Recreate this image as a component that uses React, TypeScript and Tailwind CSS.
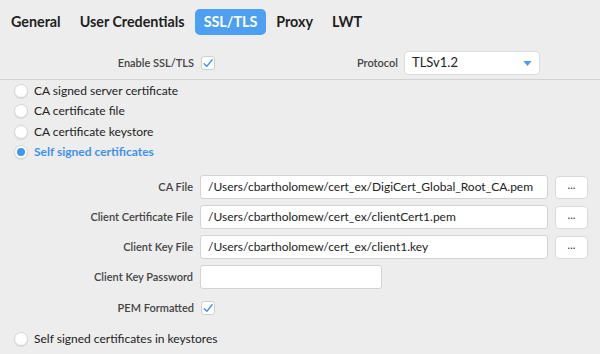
const TABS = ["General", "User Credentials", "SSL/TLS", "Proxy", "LWT"];

const OPTIONS = [
  { label: "CA signed server certificate", selected: false },
  { label: "CA certificate file", selected: false },
  { label: "CA certificate keystore", selected: false },
  { label: "Self signed certificates", selected: true },
];

const FILES = [
  { label: "CA File", value: "/Users/cbartholomew/cert_ex/DigiCert_Global_Root_CA.pem" },
  { label: "Client Certificate File", value: "/Users/cbartholomew/cert_ex/clientCert1.pem" },
  { label: "Client Key File", value: "/Users/cbartholomew/cert_ex/client1.key" },
];

function Radio({ selected }: { selected: boolean }) {
  return (
    <span className="w-[14px] h-[14px] rounded-full bg-white border border-[#d6d6d6] shadow-[0_1px_1px_rgba(0,0,0,0.08)] flex items-center justify-center shrink-0">
      {selected && <span className="w-[8px] h-[8px] rounded-full bg-[#3d97f3]" />}
    </span>
  );
}

function Check() {
  return (
    <span className="w-[14px] h-[14px] rounded-[3px] bg-white border border-[#cfcfcf] flex items-center justify-center">
      <svg viewBox="0 0 14 14" className="w-[13px] h-[13px]">
        <path d="M2.5 7.2 L5.6 10.3 L11.8 2.6" fill="none" stroke="#3d8ff0" strokeWidth="1.6" strokeLinecap="round" strokeLinejoin="round" />
      </svg>
    </span>
  );
}

export default function App() {
  return (
    <div className="w-[600px] h-[354px] bg-[#ededed] overflow-hidden text-[#333] font-['Lato','Open_Sans',sans-serif]">
      {/* Tabs */}
      <div className="flex items-center h-[42px] pl-[2px] pt-[1px] gap-[1px]">
        {TABS.map((t) => (
          <span
            key={t}
            className={`px-[9px] h-[26px] flex items-center rounded-[5px] text-[14.3px] font-bold ${
              t === "SSL/TLS" ? "bg-[#4d9ff2] text-white" : "text-[#1e1e1e]"
            }`}
          >
            {t}
          </span>
        ))}
      </div>

      {/* Enable / Protocol */}
      <div className="flex items-center h-[38px] pt-[5px] border-b border-[#d2d2d2]">
        <div className="w-[194px] text-right text-[11px] font-semibold text-[#444]">Enable SSL/TLS</div>
        <div className="ml-[7px]">
          <Check />
        </div>
        <div className="w-[183px] text-right text-[11px] font-semibold text-[#444]">Protocol</div>
        <div className="ml-[6px] w-[136px] h-[24px] bg-white rounded-[4px] border border-[#dcdcdc] flex items-center justify-between pl-[7px] pr-[7px] text-[13px] text-[#222]">
          TLSv1.2
          <svg viewBox="0 0 10 6" className="w-[9px] h-[5px]">
            <path d="M0 0 H10 L5 6 Z" fill="#4a9cf0" />
          </svg>
        </div>
      </div>

      {/* Radio options */}
      <div className="flex flex-col pt-[1px]">
        {OPTIONS.map((o) => (
          <div key={o.label} className="flex items-center h-[20.3px] pl-[14px] gap-[6px]">
            <Radio selected={o.selected} />
            <span className={`text-[12px] ${o.selected ? "text-[#3d91ee] font-bold" : "text-[#222]"}`}>{o.label}</span>
          </div>
        ))}
      </div>

      {/* File fields */}
      <div className="flex flex-col mt-[13px] gap-[6px]">
        {FILES.map((f) => (
          <div key={f.label} className="flex items-center h-[24px]">
            <div className="w-[193px] text-right text-[11px] font-semibold text-[#444]">{f.label}</div>
            <div className="ml-[7px] w-[348px] h-[24px] bg-white border border-[#d3d3d3] rounded-[3px] flex items-center pl-[7px] text-[12px] text-[#222] whitespace-nowrap overflow-hidden">
              {f.value}
            </div>
            <div className="ml-[7px] w-[33px] h-[23px] bg-white border border-[#dadada] rounded-[4px] flex items-center justify-center text-[11px] text-[#333] pb-[3px]">
              ...
            </div>
          </div>
        ))}
        <div className="flex items-center h-[24px]">
          <div className="w-[193px] text-right text-[11px] font-semibold text-[#444]">Client Key Password</div>
          <div className="ml-[7px] w-[182px] h-[24px] bg-white border border-[#d3d3d3] rounded-[3px]" />
        </div>
        <div className="flex items-center h-[26px]">
          <div className="w-[194px] text-right text-[11px] font-semibold text-[#444]">PEM Formatted</div>
          <div className="ml-[7px]">
            <Check />
          </div>
        </div>
      </div>

      <div className="flex items-center h-[20px] pl-[14px] gap-[6px] mt-[8px]">
        <Radio selected={false} />
        <span className="text-[12px] text-[#222]">Self signed certificates in keystores</span>
      </div>
    </div>
  );
}
